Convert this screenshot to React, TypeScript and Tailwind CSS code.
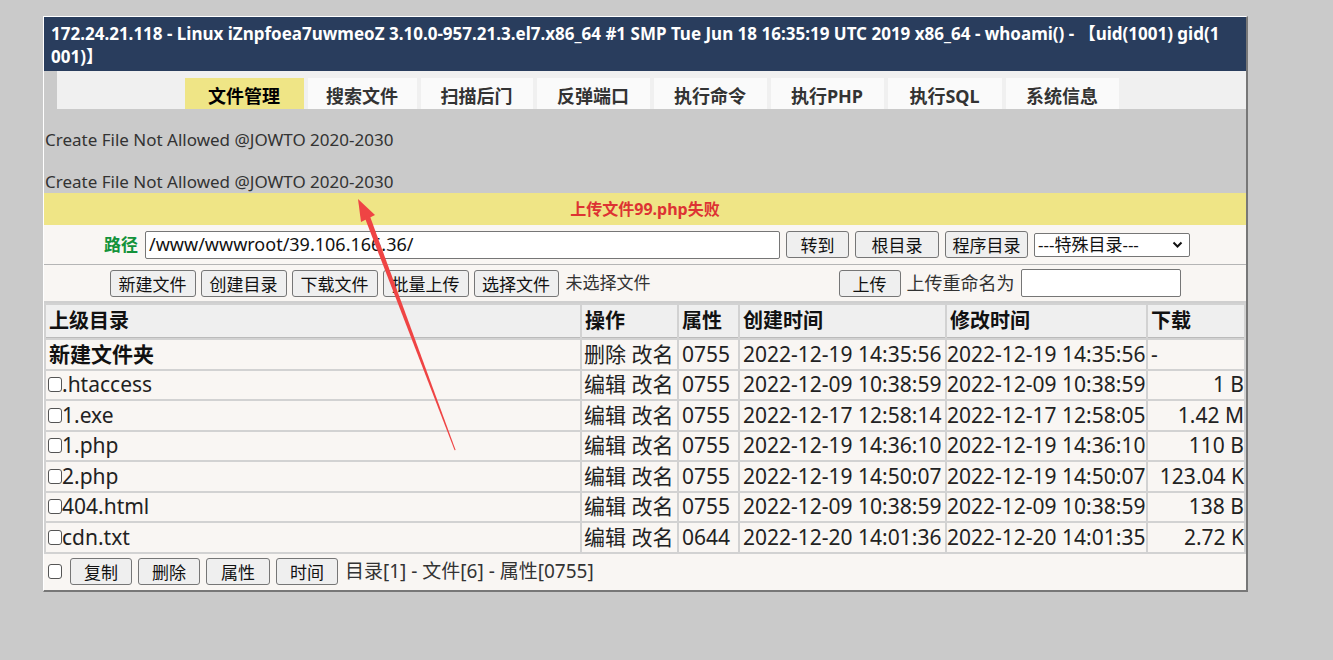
import React from "react";

const TABS = [
  { label: "文件管理", w: "w-[119px]", active: true },
  { label: "搜索文件", w: "w-[109px]" },
  { label: "扫描后门", w: "w-[112px]" },
  { label: "反弹端口", w: "w-[113px]" },
  { label: "执行命令", w: "w-[113px]" },
  { label: "执行PHP", w: "w-[113px]" },
  { label: "执行SQL", w: "w-[114px]" },
  { label: "系统信息", w: "w-[113px]" },
];

const FILES = [
  { name: ".htaccess", perm: "0755", ctime: "2022-12-09 10:38:59", mtime: "2022-12-09 10:38:59", size: "1 B" },
  { name: "1.exe", perm: "0755", ctime: "2022-12-17 12:58:14", mtime: "2022-12-17 12:58:05", size: "1.42 M" },
  { name: "1.php", perm: "0755", ctime: "2022-12-19 14:36:10", mtime: "2022-12-19 14:36:10", size: "110 B" },
  { name: "2.php", perm: "0755", ctime: "2022-12-19 14:50:07", mtime: "2022-12-19 14:50:07", size: "123.04 K" },
  { name: "404.html", perm: "0755", ctime: "2022-12-09 10:38:59", mtime: "2022-12-09 10:38:59", size: "138 B" },
  { name: "cdn.txt", perm: "0644", ctime: "2022-12-20 14:01:36", mtime: "2022-12-20 14:01:35", size: "2.72 K" },
];

function Btn({ children, w }: { children: React.ReactNode; w: string }) {
  return (
    <span
      className={`${w} h-[27px] inline-flex items-center justify-center bg-[#efefef] border border-[#767676] rounded-[3px] text-[17px] text-[#111] leading-none pt-[2px]`}
    >
      {children}
    </span>
  );
}

function Box({ size = "w-[14px] h-[15px]" }: { size?: string }) {
  return <span className={`${size} inline-block shrink-0 border border-[#555] rounded-[3px] bg-white`} />;
}

export default function App() {
  return (
    <div className="relative min-h-[660px] bg-[#cacaca] font-['Noto_Sans','Noto_Sans_CJK_SC',sans-serif] text-[#222] overflow-hidden">
      <div className="ml-[43px] pt-[16px] w-[1205px]">
        <div className="border-t border-l border-white border-r-2 border-b-2 border-r-[#777] border-b-[#777]">
          {/* header */}
          <div className="bg-[#293d5d] text-white font-bold text-[17px] leading-[23px] px-[7px] pt-[5px] pb-[3px] whitespace-nowrap overflow-hidden">
            <div>172.24.21.118 - Linux iZnpfoea7uwmeoZ 3.10.0-957.21.3.el7.x86_64 #1 SMP Tue Jun 18 16:35:19 UTC 2019 x86_64 - whoami() - 【uid(1001) gid(1</div>
            <div>001)】</div>
          </div>

          {/* tabs */}
          <div className="ml-[13px] bg-[#f0f0f0] h-[38px] flex items-end justify-center gap-[4px]">
            {TABS.map((t) => (
              <div
                key={t.label}
                className={`${t.w} h-[31px] flex items-end justify-center pb-[1px] font-bold text-[18px] leading-[24px] ${
                  t.active ? "bg-[#efe586] text-black" : "bg-[#fafafa] text-[#333]"
                }`}
              >
                {t.label}
              </div>
            ))}
          </div>

          {/* messages */}
          <div className="pt-[20px] text-[17px] leading-[22px] text-[#333]">
            <div className="pl-[1px]">Create File Not Allowed @JOWTO 2020-2030</div>
            <div className="pl-[1px] mt-[20px]">Create File Not Allowed @JOWTO 2020-2030</div>
          </div>

          {/* error bar */}
          <div className="h-[32px] bg-[#efe586] flex items-center justify-center text-[16px] font-bold text-[#dd3333]">
            上传文件99.php失败
          </div>

          {/* main box */}
          <div className="bg-[#f9f6f3]">
            {/* path row */}
            <div className="h-[40px] border-b border-[#b5b5b5] flex items-center justify-center gap-[6px] pl-[4px]">
              <span className="text-[17px] font-bold text-[#13923a] mr-[1px]">路径</span>
              <span className="w-[635px] h-[28px] bg-white border border-[#767676] rounded-[2px] flex items-center px-[3px] text-[18px] text-[#111]">
                /www/wwwroot/39.106.166.36/
              </span>
              <Btn w="w-[63px]">转到</Btn>
              <Btn w="w-[84px]">根目录</Btn>
              <Btn w="w-[83px]">程序目录</Btn>
              <span className="w-[156px] h-[24px] bg-white border border-[#767676] rounded-[2px] flex items-center justify-between pl-[3px] pr-[6px] text-[17px] text-[#111]">
                ---特殊目录---
                <svg width="11" height="8" viewBox="0 0 11 8">
                  <path d="M1.5 1.5 L5.5 5.5 L9.5 1.5" fill="none" stroke="#111" strokeWidth="2" />
                </svg>
              </span>
            </div>

            {/* actions row */}
            <div className="h-[36px] flex items-center justify-center">
              <div className="flex items-center gap-[5px]">
                <Btn w="w-[86px]">新建文件</Btn>
                <Btn w="w-[86px]">创建目录</Btn>
                <Btn w="w-[86px]">下载文件</Btn>
                <Btn w="w-[86px]">批量上传</Btn>
                <Btn w="w-[85px]">选择文件</Btn>
                <span className="text-[17px] text-[#333] ml-[2px]">未选择文件</span>
              </div>
              <div className="flex items-center gap-[6px] ml-[188px]">
                <Btn w="w-[62px]">上传</Btn>
                <span className="text-[18px] text-[#333]">上传重命名为</span>
                <span className="w-[160px] h-[28px] bg-white border border-[#767676] rounded-[2px]" />
              </div>
            </div>

            {/* file table */}
            <div className="h-[2px] bg-[#cfcfcf]" />
            <table className="w-full border-separate border-spacing-[2px] bg-[#d2d2d2] text-[21px] leading-none">
              <thead>
                <tr className="bg-[#efefef] font-bold text-left text-[#111] text-[20px]">
                  <th className="w-[534px] h-[33px] px-[3px] border-b border-[#bbb]">上级目录</th>
                  <th className="w-[95px] px-[3px] border-b border-[#bbb]">操作</th>
                  <th className="w-[59px] px-[3px] border-b border-[#bbb]">属性</th>
                  <th className="w-[205px] px-[3px] border-b border-[#bbb]">创建时间</th>
                  <th className="w-[199px] px-[3px] border-b border-[#bbb]">修改时间</th>
                  <th className="px-[3px] border-b border-[#bbb]">下载</th>
                </tr>
              </thead>
              <tbody className="bg-[#f9f6f3]">
                <tr>
                  <td className="h-[28.5px] px-[3px] font-bold text-[#111]">新建文件夹</td>
                  <td className="px-[2px] whitespace-nowrap">删除 改名</td>
                  <td className="px-[3px]">0755</td>
                  <td className="px-[3px] whitespace-nowrap">2022-12-19 14:35:56</td>
                  <td className="px-0 whitespace-nowrap">2022-12-19 14:35:56</td>
                  <td className="px-[3px]">-</td>
                </tr>
                {FILES.map((f) => (
                  <tr key={f.name}>
                    <td className="h-[28.5px] px-[2px]">
                      <span className="flex items-center">
                        <Box />
                        <span>{f.name}</span>
                      </span>
                    </td>
                    <td className="px-[2px] whitespace-nowrap">编辑 改名</td>
                    <td className="px-[3px]">{f.perm}</td>
                    <td className="px-[3px] whitespace-nowrap">{f.ctime}</td>
                    <td className="px-0 whitespace-nowrap">{f.mtime}</td>
                    <td className="px-0 text-right whitespace-nowrap">{f.size}</td>
                  </tr>
                ))}
              </tbody>
            </table>

            {/* footer */}
            <div className="h-[36px] flex items-center gap-[6px] pl-[4px]">
              <Box size="w-[14px] h-[15px]" />
              <span className="ml-[2px] flex gap-[6px]">
                <Btn w="w-[62px]">复制</Btn>
                <Btn w="w-[62px]">删除</Btn>
                <Btn w="w-[64px]">属性</Btn>
                <Btn w="w-[62px]">时间</Btn>
              </span>
              <span className="text-[19px] text-[#333] ml-[1px]">目录[1] - 文件[6] - 属性[0755]</span>
            </div>
          </div>
        </div>
      </div>

      {/* annotation arrow */}
      <svg className="absolute left-0 top-0 pointer-events-none" width="1333" height="660">
        <polygon points="358,199 361,222 375,215" fill="#ef4444" />
        <polygon points="364.5,217 369.5,215 455.6,450 454.6,450.3" fill="#ef4444" />
      </svg>
    </div>
  );
}
